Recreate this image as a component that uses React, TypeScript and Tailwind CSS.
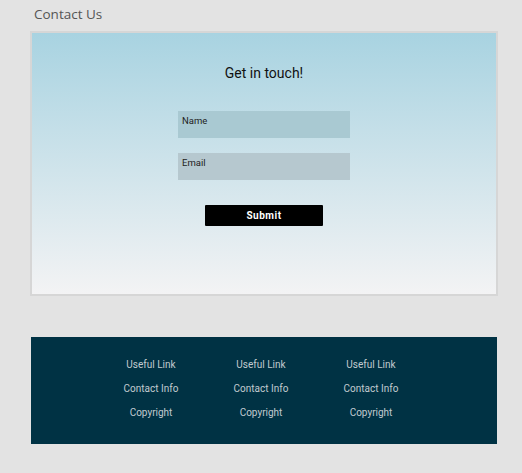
import React from "react";

export default function App() {
  const cols = [0, 1, 2];
  return (
    <div className="w-[522px] h-[473px] bg-[#e3e3e3] overflow-hidden" style={{ fontFamily: "Roboto, sans-serif" }}>
      <div className="pl-[34px] pt-[4px] h-[31px] text-[13.5px] text-[#555555]" style={{ fontFamily: "'Open Sans', sans-serif" }}>
        Contact Us
      </div>
      <div className="ml-[30px] w-[468px] h-[265px] border-2 border-[#d6d6d6] bg-gradient-to-b from-[#a8d3e1] to-[#f3f3f4] flex flex-col items-center">
        <div className="mt-[31px] text-[14px] text-[#111] leading-[18px]">Get in touch!</div>
        <div className="mt-[29px] w-[172px] h-[27px] bg-[#a9c9d2] pl-[4px] pt-[4px] text-[9.5px] leading-[12px] text-[#222]">Name</div>
        <div className="mt-[15px] w-[172px] h-[27px] bg-[#b6c8cf] pl-[4px] pt-[4px] text-[9.5px] leading-[12px] text-[#222]">Email</div>
        <div className="mt-[25px] w-[118px] h-[21px] bg-black rounded-[1px] flex items-center justify-center text-white text-[10px] font-bold tracking-[0.5px]">Submit</div>
      </div>
      <div className="mt-[41px] ml-[31px] w-[466px] h-[107px] bg-[#003244] flex justify-center pt-[16px] pr-[6px]">
        {cols.map((c) => (
          <div key={c} className="w-[110px] flex flex-col items-center text-[10px] leading-[24px] text-[#c2cbd0]">
            <span>Useful Link</span>
            <span>Contact Info</span>
            <span>Copyright</span>
          </div>
        ))}
      </div>
    </div>
  );
}
